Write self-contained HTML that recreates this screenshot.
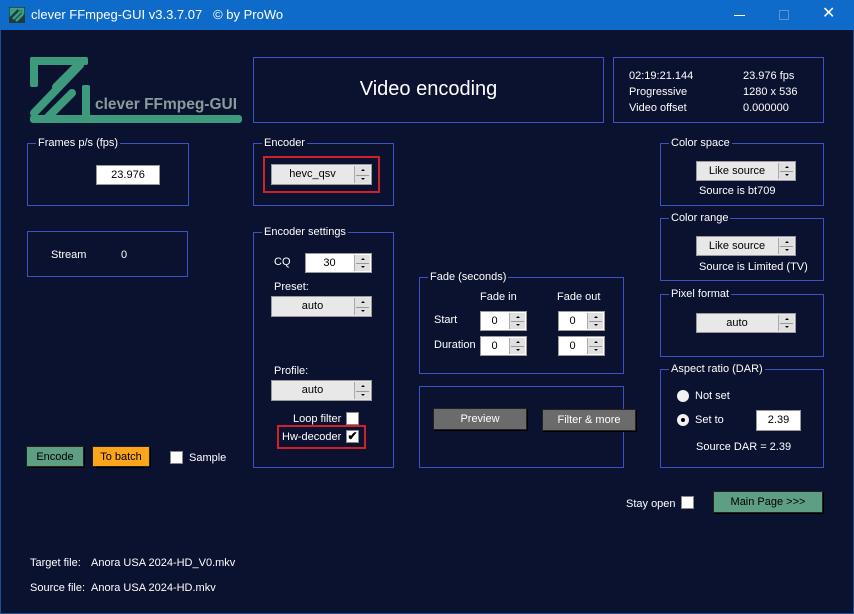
<!DOCTYPE html>
<html><head><meta charset="utf-8"><style>
*{box-sizing:border-box;margin:0;padding:0}
body{width:854px;height:614px;background:#0b1230;font-family:"Liberation Sans",sans-serif;font-size:11px;color:#fff;position:relative;overflow:hidden}
.a{position:absolute;white-space:nowrap}
.tb{left:0;top:0;width:854px;height:30px;background:#0f6bc9}
.win{left:0;top:30px;width:854px;height:584px;border:1px solid #1d4f95;border-top:none;background:#0b1230}
.g{position:absolute;border:1px solid #3c52c4}
.g .l{position:absolute;top:-8px;left:8px;background:#0b1230;padding:0 2px;line-height:14px;white-space:nowrap}
.b{position:absolute;border:1px solid #3c52c4}
.sp{position:absolute;border:1px solid #9a9a9a;background:#e8e8e8;color:#000;line-height:18px;text-align:center;padding-right:18px}
.sp.w{background:#fff}
.sp .ar{position:absolute;right:1px;top:1px;bottom:1px;width:16px;background:#e0e0e0;border-left:1px solid #aaa}
.sp .ar:before{content:"";position:absolute;left:1px;right:1px;top:50%;border-top:1px solid #999}
.sp .ar i{position:absolute;left:6px;width:0;height:0;border-left:2px solid transparent;border-right:2px solid transparent}
.sp .ar i.u{top:3px;border-bottom:2px solid #000}
.sp .ar i.d{bottom:3px;border-top:2px solid #000}
.tx{position:absolute;background:#fff;color:#000;border:1px solid #999;text-align:center;line-height:18px}
.btn{position:absolute;text-align:center;line-height:20px;border:1px solid #222;box-shadow:1px 1px 0 #000;white-space:nowrap}
.cb{position:absolute;width:13px;height:13px;background:#fff;border:1px solid #888}
.red{position:absolute;border:2px solid #d0202a}
.rad{position:absolute;width:12px;height:12px;border-radius:50%;background:#f0f0f0}
</style></head><body>
<div class="a tb">
 <svg class="a" style="left:9px;top:7px" width="16" height="16" viewBox="0 0 16 16"><rect width="16" height="16" fill="#1f3b3a"/><path d="M2 2h5L2 7zM4 12L12 4M7 14L14 7M9 2h5v5" stroke="#3aa07f" stroke-width="2.5" fill="none"/></svg>
 <div class="a" style="left:31px;top:7px;font-size:13px;color:#fff;white-space:nowrap">clever FFmpeg-GUI v3.3.7.07 &nbsp;&nbsp;© by ProWo</div>
 <div class="a" style="left:734px;top:15px;width:11px;border-top:1px solid #fff"></div>
 <div class="a" style="left:779px;top:10px;width:10px;height:10px;border:1px solid #5f92cf"></div>
 <div class="a" style="left:822px;top:6px;font-size:16px;line-height:16px">✕</div>
</div>
<div class="a win"></div>

<svg class="a" style="left:28px;top:57px" width="216" height="67" viewBox="0 0 216 67">
 <g fill="#3d9a7c">
  <rect x="2" y="0" width="58" height="8" rx="2"/>
  <rect x="2" y="0" width="8" height="30" rx="2"/>
  <rect x="2" y="58" width="212" height="8" rx="3"/>
  <rect x="54" y="28" width="8" height="32" rx="2"/>
 </g>
 <g stroke="#3d9a7c" stroke-width="8" stroke-linecap="round" fill="none">
  <path d="M6 56L52 8"/><path d="M20 60L44 36"/><path d="M28 30L50 8"/>
 </g>
 <text x="67" y="52" font-family="Liberation Sans" font-weight="bold" font-size="16" fill="#8c9a9a" textLength="142" lengthAdjust="spacingAndGlyphs">clever FFmpeg-GUI</text>
</svg>

<div class="b" style="left:253px;top:57px;width:351px;height:66px"><div class="a" style="left:0;right:0;top:20px;text-align:center;font-size:20px">Video encoding</div></div>
<div class="b" style="left:613px;top:57px;width:211px;height:66px">
 <div class="a" style="left:15px;top:10px;line-height:16px">02:19:21.144<br>Progressive<br>Video offset</div>
 <div class="a" style="left:129px;top:10px;line-height:16px">23.976 fps<br>1280 x 536<br>0.000000</div>
</div>

<div class="g" style="left:27px;top:143px;width:162px;height:63px"><span class="l">Frames p/s (fps)</span>
 <div class="tx" style="left:68px;top:21px;width:64px;height:20px">23.976</div></div>
<div class="b" style="left:27px;top:231px;width:161px;height:46px"><div class="a" style="left:23px;top:17px">Stream</div><div class="a" style="left:93px;top:17px">0</div></div>

<div class="g" style="left:253px;top:143px;width:141px;height:63px"><span class="l">Encoder</span></div>
<div class="red" style="left:263px;top:156px;width:117px;height:37px"></div>
<div class="sp" style="left:271px;top:164px;width:101px;height:21px">hevc_qsv<div class="ar"><i class="u"></i><i class="d"></i></div></div>

<div class="g" style="left:253px;top:232px;width:141px;height:236px"><span class="l">Encoder settings</span></div>
<div class="a" style="left:274px;top:256px">CQ</div>
<div class="sp w" style="left:305px;top:253px;width:67px;height:20px">30<div class="ar"><i class="u"></i><i class="d"></i></div></div>
<div class="a" style="left:274px;top:281px">Preset:</div>
<div class="sp" style="left:271px;top:296px;width:101px;height:21px">auto<div class="ar"><i class="u"></i><i class="d"></i></div></div>
<div class="a" style="left:274px;top:365px">Profile:</div>
<div class="sp" style="left:271px;top:380px;width:101px;height:21px">auto<div class="ar"><i class="u"></i><i class="d"></i></div></div>
<div class="a" style="left:293px;top:413px">Loop filter</div>
<div class="cb" style="left:346px;top:412px"></div>
<div class="red" style="left:277px;top:425px;width:89px;height:24px"></div>
<div class="a" style="left:282px;top:431px">Hw-decoder</div>
<div class="cb" style="left:346px;top:430px;font-size:12px;line-height:10px;color:#000;text-align:center;font-weight:bold">✔</div>

<div class="g" style="left:419px;top:277px;width:205px;height:97px"><span class="l">Fade (seconds)</span>
 <div class="a" style="left:60px;top:13px">Fade in</div><div class="a" style="left:137px;top:13px">Fade out</div>
 <div class="a" style="left:14px;top:36px">Start</div><div class="a" style="left:14px;top:61px">Duration</div>
 <div class="sp w" style="left:60px;top:33px;width:47px;height:20px">0<div class="ar"><i class="u"></i><i class="d"></i></div></div>
 <div class="sp w" style="left:138px;top:33px;width:47px;height:20px">0<div class="ar"><i class="u"></i><i class="d"></i></div></div>
 <div class="sp w" style="left:60px;top:58px;width:47px;height:20px">0<div class="ar"><i class="u"></i><i class="d"></i></div></div>
 <div class="sp w" style="left:138px;top:58px;width:47px;height:20px">0<div class="ar"><i class="u"></i><i class="d"></i></div></div>
</div>
<div class="b" style="left:419px;top:386px;width:205px;height:82px"></div>
<div class="btn" style="left:433px;top:408px;width:94px;height:22px;background:#6b6b6b;color:#fff">Preview</div>
<div class="btn" style="left:542px;top:409px;width:94px;height:22px;background:#6b6b6b;color:#fff">Filter &amp; more</div>

<div class="g" style="left:660px;top:143px;width:164px;height:63px"><span class="l">Color space</span>
 <div class="sp" style="left:35px;top:17px;width:100px;height:20px">Like source<div class="ar"><i class="u"></i><i class="d"></i></div></div>
 <div class="a" style="left:38px;top:41px">Source is bt709</div></div>
<div class="g" style="left:660px;top:218px;width:164px;height:63px"><span class="l">Color range</span>
 <div class="sp" style="left:35px;top:17px;width:100px;height:20px">Like source<div class="ar"><i class="u"></i><i class="d"></i></div></div>
 <div class="a" style="left:38px;top:42px">Source is Limited (TV)</div></div>
<div class="g" style="left:660px;top:294px;width:164px;height:63px"><span class="l">Pixel format</span>
 <div class="sp" style="left:35px;top:18px;width:100px;height:20px">auto<div class="ar"><i class="u"></i><i class="d"></i></div></div></div>
<div class="g" style="left:660px;top:369px;width:164px;height:99px"><span class="l">Aspect ratio (DAR)</span>
 <div class="rad" style="left:16px;top:20px"></div><div class="a" style="left:34px;top:20px">Not set</div>
 <div class="rad" style="left:16px;top:44px"></div><div class="a" style="left:20px;top:48px;width:4px;height:4px;border-radius:50%;background:#000"></div>
 <div class="a" style="left:34px;top:44px">Set to</div>
 <div class="tx" style="left:95px;top:40px;width:45px;height:21px">2.39</div>
 <div class="a" style="left:35px;top:71px">Source DAR = 2.39</div></div>

<div class="btn" style="left:26px;top:446px;width:58px;height:21px;background:#5d9e84;color:#000">Encode</div>
<div class="btn" style="left:92px;top:446px;width:58px;height:21px;background:#fba51c;color:#000">To batch</div>
<div class="cb" style="left:170px;top:451px"></div><div class="a" style="left:189px;top:452px">Sample</div>

<div class="a" style="left:626px;top:498px">Stay open</div>
<div class="cb" style="left:681px;top:496px"></div>
<div class="btn" style="left:713px;top:491px;width:110px;height:22px;background:#5d9e84;color:#000">Main Page &gt;&gt;&gt;</div>

<div class="a" style="left:30px;top:557px">Target file:</div><div class="a" style="left:91px;top:557px">Anora USA 2024-HD_V0.mkv</div>
<div class="a" style="left:30px;top:582px">Source file:</div><div class="a" style="left:91px;top:582px">Anora USA 2024-HD.mkv</div>
</body></html>
